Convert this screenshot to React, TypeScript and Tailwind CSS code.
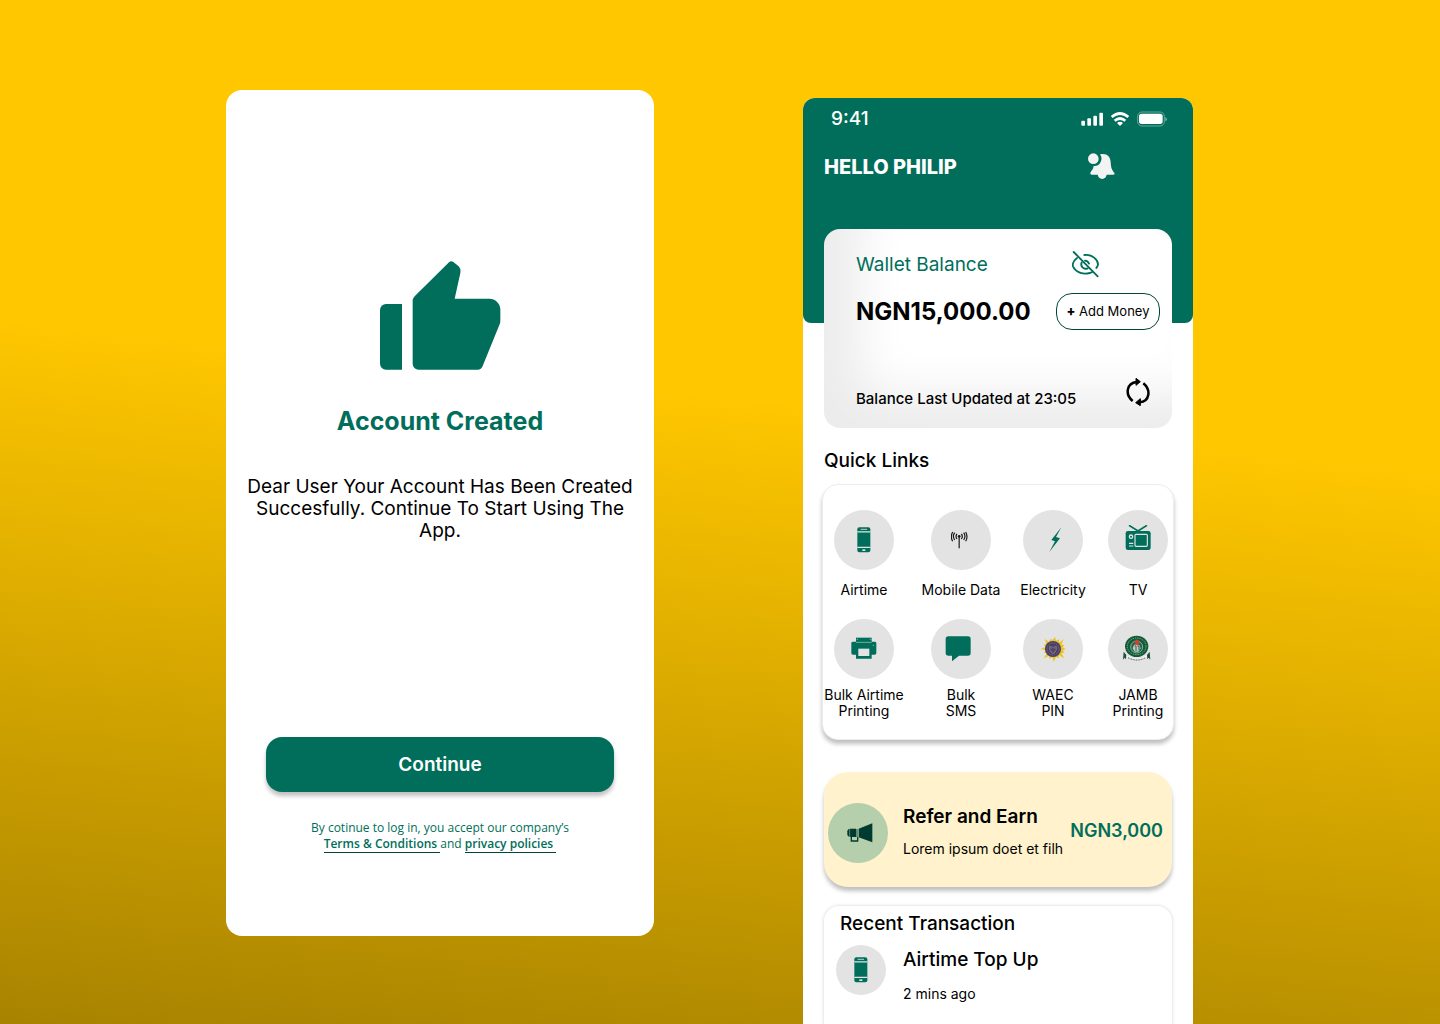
import type { ReactNode } from "react";

function ThumbIcon() {
  return (
    <svg className="h-[109px] w-[121px]" viewBox="60 32 363 327" fill="#006e5a" aria-hidden="true">
      <path d="M126 161H78a18 18 0 0 0-18 18v161a18 18 0 0 0 18 18h48z" />
      <path d="M158 153q0-9 6-15L267 36q6-6 13-1l16 13q7 8 5 20L284 145h104a33 33 0 0 1 33 33v33q0 7-3 13l-50 123q-4 11-15 11H176a18 18 0 0 1-18-18z" />
    </svg>
  );
}

function StatusIcons() {
  return (
    <svg className="h-4 w-[87px]" viewBox="843 64 261 48" fill="#fff" aria-hidden="true">
      <rect x="844" y="93" width="11" height="15" rx="3" />
      <rect x="862" y="86" width="11" height="22" rx="3" />
      <rect x="880" y="78" width="11" height="30" rx="3" />
      <rect x="898" y="69" width="11" height="39" rx="3" />
      <g fill="none" stroke="#fff" strokeWidth="8">
        <path d="M935 82q25-21 50 0" />
        <path d="M944 93q16-13 32 0" />
      </g>
      <path d="M951 100q9-7 18 0l-9 9z" />
      <rect x="1013" y="67" width="80" height="42" rx="13" fill="none" stroke="#fff" strokeOpacity=".4" strokeWidth="3" />
      <rect x="1017" y="72" width="71" height="31" rx="8" />
      <path d="M1096 82q5 2 5 7t-5 6z" opacity=".45" />
    </svg>
  );
}

function BellIcon() {
  return (
    <svg className="h-7 w-7" viewBox="865 189 84 84" fill="#f3f3f3" aria-hidden="true">
      <circle cx="881" cy="206" r="16" />
      <path d="M901 193q4-1 9-1c14 0 22 9 23 24 1 18 3 22 11 33q3 5-4 5H876q-6-1-4-6c4-7 9-10 10-20a22 22 0 0 0 19-35z" />
      <path d="M894 252h27a13.500 15 0 0 1-27 0z" />
    </svg>
  );
}

function EyeOffIcon() {
  return (
    <svg className="h-7 w-7" viewBox="756 77 84 84" fill="none" stroke="#006e5a" strokeWidth="5.500" strokeLinecap="round" aria-hidden="true">
      <path d="M761 80l72 73" />
      <path d="M793 89c24-4 41 16 41 28q-1 6-5 11" />
      <path d="M771 98c-10 8-14 18-12 25 8 18 30 25 50 20l8-3" />
      <path d="M785 111c-5 12 6 23 18 18M795 106q9 1 12 9" />
    </svg>
  );
}

function RefreshIcon() {
  return (
    <svg className="h-7 w-6" viewBox="918 460 72 84" fill="none" stroke="#000" strokeWidth="7.500" aria-hidden="true">
      <path d="M938 529c-24-20-18-54 12-57" />
      <path d="M970 476c24 20 19 55-11 57" />
      <path d="M948 461l13 10-13 11zM961 522l-14 12 14 9z" fill="#000" strokeWidth="3" />
    </svg>
  );
}

function PhoneIcon() {
  return (
    <svg className="h-[26px] w-[14px]" viewBox="128 80 42 78" aria-hidden="true">
      <rect x="129" y="81" width="39" height="75" rx="6" fill="#006e5a" />
      <path d="M129 94.500h39M129 141h39" stroke="#e3e3e3" strokeWidth="3.500" />
      <path d="M139 87h19" stroke="#b9d0ca" strokeWidth="3" />
      <rect x="144" y="147" width="9" height="5" fill="#e3e3e3" />
    </svg>
  );
}

function AntennaIcon() {
  return (
    <svg className="h-[18px] w-[21px]" viewBox="409 92 63 54" fill="none" stroke="#161616" strokeWidth="3.500" aria-hidden="true">
      <path d="M433.500 110v34" />
      <circle cx="433.500" cy="108" r="4" fill="#161616" stroke="none" />
      <path d="M427 101q-6 7 0 15M420 97q-8 11 0 22M414 95q-8 14 0 28M440 101q6 7 0 15M447 97q8 11 0 22M453 95q8 14 0 28" />
    </svg>
  );
}

function BoltIcon() {
  return (
    <svg className="h-[26px] w-[17px]" viewBox="121 80 51 78" fill="#006e5a" aria-hidden="true">
      <path d="M170 81l-30 38 11 4-17 32 32-41-12-4z" />
    </svg>
  );
}

function TvIcon() {
  return (
    <svg className="h-[30px] w-7" viewBox="358 75 84 90" aria-hidden="true">
      <path d="M373 76l27 17 27-17" fill="none" stroke="#006e5a" strokeWidth="5" />
      <rect x="363" y="93" width="75" height="57" rx="7" fill="#006e5a" />
      <rect x="391" y="103" width="37" height="36" rx="3" fill="none" stroke="#e3e3e3" strokeWidth="3.500" />
      <circle cx="379" cy="110" r="5" fill="none" stroke="#e3e3e3" strokeWidth="4" />
      <path d="M373 130h13M373 138h13" stroke="#e3e3e3" strokeWidth="3.500" />
    </svg>
  );
}

function PrinterIcon() {
  return (
    <svg className="h-6 w-[26px]" viewBox="107 79 78 72" aria-hidden="true">
      <path d="M122 81h47v13h-47z" fill="#006e5a" />
      <path d="M108 97q0-4 5-4h65q5 0 5 4v30q0 5-5 5h-9v12h-47v-12h-9q-5 0-5-5z" fill="#006e5a" />
      <path d="M124 86h4M163 86h4M122 95h47" stroke="#8fbab0" strokeWidth="2.500" />
      <path d="M129 114h33v22h-33z" fill="#e3e3e3" />
      <circle cx="174" cy="104" r="2" fill="#8fbab0" />
    </svg>
  );
}

function ChatIcon() {
  return (
    <svg className="h-[26px] w-8" viewBox="391 77 96 78" fill="#006e5a" aria-hidden="true">
      <path d="M401 78h59q8 0 8 8v42q0 8-8 8h-27l-21 17v-17h-11q-8 0-8-8V86q0-8 8-8z" />
    </svg>
  );
}

function WaecIcon() {
  return (
    <svg className="h-[26px] w-[26px]" viewBox="103 77 78 78" aria-hidden="true">
      <path
        d="M142 88l6-9 3 12 9-4 1 10 13-11-7 17 10 1-6 7 9 5-9 4 6 7-10 1 9 16-16-9-1 9-8-4-7 14-4-13-8 4-1-9-17 8 10-16-9-1 5-7-15-4 15-6-6-7 9-2-6-15 14 9 2-8z"
        fill="#edc31f"
      />
      <circle cx="142" cy="116" r="24" fill="#463d70" />
      <circle cx="142" cy="116" r="18" fill="none" stroke="#85706d" strokeWidth="3" strokeDasharray="4 3" />
      <path d="M132 108q10 6 20 0v10q-2 9-10 12-8-3-10-12z" fill="#665779" stroke="#a18a5c" strokeWidth="2" />
      <path d="M134 119h16M142 111v16" stroke="#39345f" strokeWidth="2" />
    </svg>
  );
}

function JambIcon() {
  return (
    <svg className="h-7 w-8" viewBox="348 75 96 84" aria-hidden="true">
      <path d="M353 125l8 10-1 13-4-5-5 6zM431 125l-8 10 1 13 4-5 5 6z" fill="#1d5038" />
      <path d="M362 136q30 19 60 0v5q-30 19-60 0z" fill="#f3f3f3" />
      <path d="M366 143q26 14 53 0" fill="none" stroke="#444" strokeWidth="3" strokeDasharray="3 2" />
      <ellipse cx="392" cy="109" rx="35" ry="32" fill="#105c38" />
      <ellipse cx="392" cy="109" rx="28" ry="25" fill="none" stroke="#7fae93" strokeWidth="3" strokeDasharray="4 3" />
      <circle cx="392" cy="111" r="18" fill="#27634a" stroke="#c2d6ca" strokeWidth="2" />
      <path d="M384 105q8-5 16 0l4 10-7 10h-11l-6-10z" fill="#bdd0c5" />
      <path d="M386 108h4v15M394 108h5v13" stroke="#345c4a" strokeWidth="3" fill="none" />
      <path d="M386 94l6-6 8 6-3 11h-8z" fill="#dc3c31" />
    </svg>
  );
}

function MegaphoneIcon() {
  return (
    <svg className="h-5 w-[30px]" viewBox="86 191 90 60" fill="#003b31" aria-hidden="true">
      <path d="M174 192v57l-41-15v-26z" />
      <path d="M108 208h17v25h-17q-9-1-9-8v-9q0-7 9-8z" />
      <path d="M126 209h4v24h-4z" opacity=".7" />
      <path d="M111 233v12h19v-12" fill="none" stroke="#003b31" strokeWidth="4" />
      <path d="M106 209v24" stroke="#b5ceab" strokeWidth="1.500" />
    </svg>
  );
}

function Disc({ children }: { children: ReactNode }) {
  return <span className="flex size-[60px] shrink-0 items-center justify-center rounded-full bg-[#e3e3e3]">{children}</span>;
}

const links: { label: string[]; icon: ReactNode }[] = [
  { label: ["Airtime"], icon: <PhoneIcon /> },
  { label: ["Mobile Data"], icon: <AntennaIcon /> },
  { label: ["Electricity"], icon: <BoltIcon /> },
  { label: ["TV"], icon: <TvIcon /> },
  { label: ["Bulk Airtime", "Printing"], icon: <PrinterIcon /> },
  { label: ["Bulk", "SMS"], icon: <ChatIcon /> },
  { label: ["WAEC", "PIN"], icon: <WaecIcon /> },
  { label: ["JAMB", "Printing"], icon: <JambIcon /> },
];

function QuickLinks() {
  return (
    <nav
      aria-label="Quick links"
      className="mx-[19px] mt-[11px] grid grid-cols-[97fr_92fr_85fr_60fr] rounded-2xl border border-[#ededed] bg-white pt-[25px] pr-[5px] pb-5 pl-[11px] shadow-[0_4px_4px_rgba(0,0,0,0.25)]"
    >
      {links.map((link, i) => (
        <button
          key={link.label.join(" ")}
          className={
            i < 4
              ? "flex h-[109px] w-[60px] flex-col items-center gap-3 text-sm leading-4 whitespace-nowrap"
              : "flex w-[60px] flex-col items-center gap-2 text-sm leading-4 whitespace-nowrap"
          }
        >
          <Disc>{link.icon}</Disc>
          <span>
            {link.label.map((line) => (
              <span key={line} className="block">
                {line}
              </span>
            ))}
          </span>
        </button>
      ))}
    </nav>
  );
}

function CreatedScreen() {
  return (
    <section className="mt-[90px] mb-[88px] flex min-h-[846px] w-[428px] shrink-0 flex-col items-center self-start rounded-2xl bg-white px-4 pt-[171px]">
      <ThumbIcon />
      <h1 className="mt-9 text-[25px] leading-[30px] font-bold text-[#006e5a]">Account Created</h1>
      <p className="mt-10 text-center text-[19px] leading-[22px] text-black">
        Dear User Your Account Has Been Created
        <br />
        Succesfully. Continue To Start Using The
        <br />
        App.
      </p>
      <button className="mt-[195px] h-[55px] w-[348px] rounded-2xl bg-[#006e5a] pt-0.5 text-[19px] font-semibold text-white shadow-[0_4px_4px_rgba(0,0,0,0.25)]">
        Continue
      </button>
      <p className="mt-7 text-center font-['Open_Sans',sans-serif] text-xs leading-4 text-[#006e5a]">
        By cotinue to log in, you accept our company’s
        <br />
        <a href="#terms" className="border-b border-[#00473a] font-semibold whitespace-pre">
          {"Terms & Conditions "}
        </a>
        and{" "}
        <a href="#privacy" className="border-b border-[#00473a] font-semibold whitespace-pre">
          {"privacy policies "}
        </a>
      </p>
    </section>
  );
}

function HomeScreen() {
  return (
    <section className="mt-[98px] flex w-[390px] shrink-0 flex-col rounded-t-xl bg-white">
      <header className="h-[225px] rounded-xl rounded-b-lg bg-[#006e5a] pt-[11px] text-white">
        <div className="flex h-5 items-center justify-between pr-[25px] pl-7">
          <span className="text-[19px] leading-5 font-medium">9:41</span>
          <StatusIcons />
        </div>
        <div className="mt-6 flex h-7 items-center justify-between pr-[77px] pl-[21px]">
          <h2 className="text-xl leading-7 font-extrabold">HELLO PHILIP</h2>
          <button aria-label="Notifications">
            <BellIcon />
          </button>
        </div>
      </header>

      <div className="mx-[21px] -mt-[94px] rounded-2xl bg-white py-[22px] pr-3 pl-8 shadow-[inset_36px_-34px_48px_rgba(0,0,0,0.08)]">
        <div className="flex h-7 items-center justify-between pr-[60px]">
          <h3 className="text-[19px] text-[#006e5a]">Wallet Balance</h3>
          <button aria-label="Hide balance">
            <EyeOffIcon />
          </button>
        </div>
        <div className="mt-3.5 flex items-center justify-between">
          <strong className="text-2xl leading-[30px] font-bold">NGN15,000.00</strong>
          <button className="h-[37px] w-[104px] rounded-2xl border border-[#00473a] bg-white text-[13px] whitespace-nowrap">
            <b className="font-extrabold">+</b> Add Money
          </button>
        </div>
        <div className="mt-12 flex h-7 items-end justify-between pr-2.5">
          <span className="text-[15px] leading-[15px] font-medium">Balance Last Updated at 23:05</span>
          <button aria-label="Refresh balance">
            <RefreshIcon />
          </button>
        </div>
      </div>

      <h3 className="mx-[21px] mt-[21px] text-[19px] leading-6 font-medium">Quick Links</h3>
      <QuickLinks />

      <div className="mx-[21px] mt-8 flex h-[115px] items-center rounded-3xl bg-[#fff2cc] pt-1.5 pl-1 shadow-[0_4px_4px_rgba(0,0,0,0.25)]">
        <span className="flex size-[60px] shrink-0 items-center justify-center rounded-full bg-[#b5ceab]">
          <MegaphoneIcon />
        </span>
        <div className="ml-[15px] pb-1 whitespace-nowrap">
          <h3 className="text-[19px] leading-6 font-semibold">Refer and Earn</h3>
          <p className="mt-3 text-sm leading-4">Lorem ipsum doet et filh</p>
        </div>
        <strong className="mr-[9px] ml-auto pb-1 text-lg leading-6 font-semibold text-[#006e5a]">NGN3,000</strong>
      </div>

      <div className="mx-5 mt-[18px] flex-1 rounded-t-2xl border border-b-0 border-[#ededed] px-3 pt-1.5 shadow-[0_0_3px_rgba(0,0,0,0.1)]">
        <h3 className="pl-1 text-[19px] leading-6 font-medium">Recent Transaction</h3>
        <div className="mt-[9px] flex">
          <span className="flex size-[50px] shrink-0 items-center justify-center rounded-full bg-[#e3e3e3]">
            <PhoneIcon />
          </span>
          <div className="ml-[17px]">
            <h4 className="mt-[3px] text-[19px] leading-6 font-medium">Airtime Top Up</h4>
            <p className="mt-3.5 text-sm leading-4">2 mins ago</p>
          </div>
        </div>
      </div>
    </section>
  );
}

export default function App() {
  return (
    <main className="flex min-h-screen justify-center gap-[149px] bg-[linear-gradient(186deg,#ffc700_40%,#a88300_100%)] pr-[21px] font-['Inter',sans-serif] text-black">
      <CreatedScreen />
      <HomeScreen />
    </main>
  );
}
